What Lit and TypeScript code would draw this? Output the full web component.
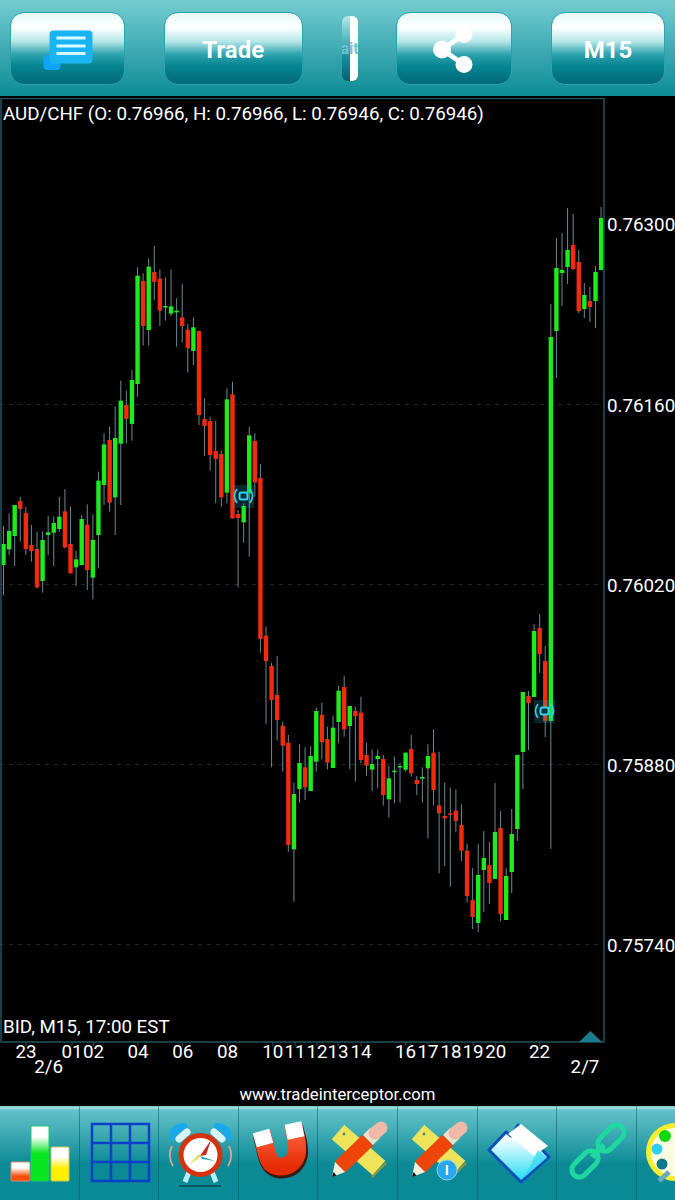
import { LitElement, html, css, svg } from "lit";
import { customElement } from "lit/decorators.js";

type Row = [string, number, number, number, number];

const conv = (y0: number, k: number, rows: Row[]): Row[] =>
  rows.map(([c, a, b, d, e]) => [c, y0 + a / k, y0 + b / k, y0 + d / k, y0 + e / k] as Row);

const candles: Row[] = [
  ...conv(240, 3, [
    ["g", 858, 1065, 912, 975], ["g", 820, 945, 873, 928], ["g", 795, 978, 795, 888], ["r", 770, 905, 783, 807],
    ["r", 800, 945, 819, 927], ["r", 855, 965, 915, 933], ["r", 875, 1045, 927, 1042], ["g", 875, 1058, 900, 1023],
    ["g", 828, 945, 877, 885], ["g", 830, 978, 849, 878], ["g", 770, 875, 830, 867], ["r", 747, 925, 814, 922],
    ["r", 800, 1000, 912, 1000], ["g", 932, 1038, 958, 982], ["g", 825, 975, 837, 975], ["r", 793, 1050, 854, 990],
    ["g", 823, 1078, 900, 1013], ["g", 695, 985, 722, 885], ["g", 580, 795, 613, 735], ["r", 560, 815, 600, 788],
    ["g", 500, 885, 594, 772], ["g", 422, 795, 482, 611], ["r", 452, 610, 495, 537], ["g", 390, 602, 420, 552],
    ["g", 82, 470, 107, 432], ["r", 100, 317, 123, 258], ["g", 55, 317, 80, 270], ["r", 18, 180, 96, 126],
    ["r", 88, 258, 116, 212], ["g", 112, 242, 198, 202], ["g", 88, 228, 199, 221], ["g", 175, 320, 212, 217],
    ["r", 132, 308, 232, 258], ["r", 252, 398, 269, 324], ["g", 232, 375, 262, 333], ["r", 272, 555, 273, 525],
    ["r", 475, 648, 537, 558], ["r", 530, 692, 543, 645], ["r", 542, 790, 633, 657], ["r", 632, 800, 642, 772],
    ["g", 445, 790, 478, 758], ["r", 425, 835, 463, 835], ["r", 810, 1042, 822, 834], ["g", 790, 908, 798, 847],
    ["g", 560, 950, 586, 760], ["r", 580, 770, 603, 727],
  ]),
  ...conv(480, 3, [
    ["r", -48, 518, -6, 477], ["r", 440, 732, 467, 543], ["r", 548, 862, 558, 660], ["r", 528, 782, 645, 720],
    ["r", 725, 875, 737, 797], ["r", 765, 1115, 788, 1095], ["g", 908, 1265, 942, 1108], ["g", 793, 968, 849, 927],
    ["r", 802, 960, 862, 922], ["g", 798, 933, 828, 933], ["g", 683, 875, 693, 845], ["r", 668, 838, 705, 787],
    ["r", 740, 868, 777, 848], ["g", 707, 864, 743, 864], ["g", 617, 790, 632, 726], ["r", 587, 770, 621, 748],
    ["g", 678, 868, 678, 738], ["r", 680, 905, 693, 708], ["r", 650, 850, 698, 840], ["r", 788, 887, 825, 857],
    ["g", 808, 933, 852, 869], ["g", 808, 925, 828, 837], ["r", 825, 977, 837, 945], ["g", 858, 1013, 895, 958],
    ["g", 830, 970, 872, 876], ["g", 850, 968, 858, 862], ["g", 818, 875, 818, 869], ["r", 765, 890, 807, 880],
    ["r", 888, 945, 900, 912], ["g", 862, 968, 891, 896], ["g", 793, 1075, 828, 865], ["r", 748, 977, 818, 930],
    ["r", 815, 1180, 976, 1000], ["r", 908, 1158, 1008, 1015], ["r", 923, 1220, 1000, 1003], ["r", 928, 1057, 992, 1023],
    ["r", 973, 1142, 1035, 1112], ["r", 1090, 1268, 1112, 1248],
  ]),
  ...conv(0, 1, [
    ["r", 868, 929, 900, 917], ["g", 844, 932, 875, 923], ["g", 831, 912, 858, 870], ["r", 842, 904, 865, 883],
    ["g", 783, 879, 832, 879], ["r", 811, 921, 828, 914], ["g", 868, 920, 876, 920], ["g", 809, 893, 834, 872],
    ["g", 755, 841, 755, 829], ["g", 692, 789, 692, 752], ["r", 691, 750, 696, 703], ["g", 624, 697, 631, 697],
    ["r", 614, 673, 628, 654], ["r", 646, 737, 661, 721], ["g", 304, 849, 337, 721], ["g", 238, 378, 268, 331],
    ["g", 233, 306, 270, 273], ["g", 208, 284, 250, 267], ["r", 214, 270, 245, 269], ["r", 250, 313, 262, 311],
    ["g", 283, 318, 295, 309], ["r", 287, 322, 301, 307], ["g", 266, 328, 272, 301], ["g", 207, 270, 218, 270],
  ]),
];

const xOf = (i: number) => 3.5 + 5.585 * i;
const prices: [string, number][] = [["0.76300", 224], ["0.76160", 405], ["0.76020", 585], ["0.75880", 765], ["0.75740", 945]];
const hours: [string, number][] = [
  ["23", 26], ["01", 72], ["02", 93.5], ["04", 138], ["06", 182.7], ["08", 227.6], ["10", 272.8], ["11", 295],
  ["12", 317], ["13", 338], ["14", 361], ["16", 405.6], ["17", 428], ["18", 451], ["19", 473], ["20", 495.7], ["22", 539.6],
];

const marker = (x: number, y: number) => svg`
  <rect x=${x - 10} y=${y - 11} width="21" height="23" fill="#25c4e4" opacity="0.2"></rect>
  <rect x=${x - 3.5} y=${y - 3.5} width="8" height="7" rx="2" fill="#06323c" stroke="#2fd4f2" stroke-width="2"></rect>
  <path d="M${x - 6} ${y - 7}Q${x - 11} ${y} ${x - 6} ${y + 7}M${x + 7} ${y - 7}Q${x + 12} ${y} ${x + 7} ${y + 7}" fill="none" stroke="#2fd4f2" stroke-width="1.6"></path>`;

const tools = (info: boolean) => svg`
  <path d="M20 26L61 62" stroke="#efe35a" stroke-width="19"></path>
  <path d="M54 71L68 57" stroke="#8f9a3c" stroke-width="2"></path>
  <circle cx="26" cy="28" r="1.4" fill="#3d8a80"></circle>
  <path d="M22 61L50 34" stroke="#ee460a" stroke-width="15"></path>
  <path d="M50 34L57 27" stroke="#ece5cd" stroke-width="14"></path>
  <path d="M57 27L63 22" stroke="#f0b8a6" stroke-width="13" stroke-linecap="round"></path>
  <path d="M17 56L27 66L14 71Z" fill="#f7efd8"></path>
  <path d="M15.500 66L18.500 69.500L14 71Z" fill="#111"></path>
  ${info ? svg`<circle cx="49" cy="64" r="10" fill="#2aa6ea" stroke="#7fd6f6" stroke-width="1"></circle>
    <path d="M49 59V69" stroke="#fff" stroke-width="2.400"></path>` : ""}`;

@customElement("app-root")
export class AppRoot extends LitElement {
  static styles = css`
    :host { display: block; width: 675px; height: 1200px; background: #000; overflow: hidden; font-family: Roboto, "Liberation Sans", sans-serif; }
    .top { height: 96px; box-sizing: border-box; padding: 1px 10px 0; display: flex; align-items: center; justify-content: space-between;
      background: linear-gradient(#74ccd0, #0c8b97); margin-bottom: 2px; }
    .btn { height: 73px; box-sizing: border-box; border: 1.500px solid #2ba3ae; border-radius: 14px; display: flex; align-items: center; justify-content: center;
      background: linear-gradient(#e5f8f8 0%, #fff 20%, #b5e6e8 40%, #2ea4ae 58%, #068492 75%, #02697a 100%);
      color: #fff; font-weight: 700; font-size: 24px; padding-top: 3px; }
    .w115 { width: 115px; } .w116 { width: 116px; } .w139 { width: 139px; } .w114 { width: 114px; }
    .btn svg { margin-top: -3px; }
    .narrow { width: 16px; height: 65px; box-sizing: border-box; border-radius: 6px; overflow: hidden; display: flex; align-items: center; justify-content: center;
      background: linear-gradient(90deg, transparent 48%, #fff 52%), linear-gradient(#b9e7e9, #1a95a1 60%, #02606e);
      color: #74c6cc; font-size: 16px; font-weight: 700; white-space: nowrap; }
    .chart { display: block; width: 675px; height: 985px; }
    .chart text { fill: #fff; font-family: Roboto, "Liberation Sans", sans-serif; font-size: 18.750px; }
    .site { height: 23px; text-align: center; color: #fff; font-size: 16.700px; line-height: 24px; }
    .bottom { height: 94px; display: flex; overflow: hidden; background: linear-gradient(#6fc9cd 0, #a3e0e2 2px, #64c2c8 4px, #0b8a96 62%, #0a8a96 100%); }
    .cell { flex: none; width: 79.600px; height: 94px; box-sizing: border-box; border-right: 1px solid rgba(0, 70, 80, 0.45); }
    .cell svg { display: block; width: 80px; height: 94px; }
  `;

  render() {
    return html`
      <div class="top">
        <div class="btn w115">
          <svg width="60" height="50" viewBox="0 0 60 50">
            <rect x="5.500" y="31" width="17" height="15" rx="4" fill="#0ea6f4"></rect>
            <rect x="11.500" y="6.500" width="43" height="33" rx="4" fill="#1ab4f2"></rect>
            <path d="M18.500 14H47.500M18.500 22H47.500M18.500 29.500H47.500" stroke="#d8f8ff" stroke-width="3"></path>
          </svg>
        </div>
        <div class="btn w139">Trade</div>
        <div class="narrow">ait</div>
        <div class="btn w116">
          <svg width="50" height="50" viewBox="0 0 50 50">
            <path d="M35 10.500L13 25.500L35 40.500" fill="none" stroke="#fff" stroke-width="5"></path>
            <circle cx="35" cy="10.500" r="8.500" fill="#fff"></circle>
            <circle cx="13" cy="25.500" r="9" fill="#fff"></circle>
            <circle cx="35" cy="40.500" r="8.500" fill="#fff"></circle>
          </svg>
        </div>
        <div class="btn w114">M15</div>
      </div>

      <svg class="chart" viewBox="0 98 675 985">
        ${prices.slice(1).map(([, y]) => svg`<line x1="0" x2="603" y1=${y - 0.5} y2=${y - 0.5} stroke="#262626" stroke-dasharray="4 5"></line>`)}
        ${candles.map(([c, a, b], i) => svg`<line x1=${xOf(i)} x2=${xOf(i)} y1=${a} y2=${b} stroke="#6a8a94" stroke-width="1"></line>`)}
        ${candles.map(([c, , , d, e], i) => svg`<rect x=${xOf(i) - 2.2} y=${d} width="4.400" height=${Math.max(e - d, 1.5)} fill=${c === "g" ? "#1cec1e" : "#f22b0e"}></rect>`)}
        ${marker(243, 496)}
        ${marker(544, 711)}
        <path d="M1 98.500H604V1042H1Z" fill="none" stroke="#27525e" stroke-width="1.500"></path>
        ${hours.map(([, x]) => svg`<line x1=${x} x2=${x} y1="1042" y2="1046" stroke="#27525e"></line>`)}
        <path d="M579 1042L590.500 1031L602 1042Z" fill="#1b7c90"></path>
        <text x="3" y="120">AUD/CHF (O: 0.76966, H: 0.76966, L: 0.76946, C: 0.76946)</text>
        <text x="3" y="1033">BID, M15, 17:00 EST</text>
        ${prices.map(([t, y]) => svg`<text x="607" y=${y + 6.5}>${t}</text>`)}
        ${hours.map(([t, x]) => svg`<text x=${x} y="1058" text-anchor="middle">${t}</text>`)}
        <text x="48.700" y="1073" text-anchor="middle">2/6</text>
        <text x="585" y="1073" text-anchor="middle">2/7</text>
      </svg>
      <div class="site">www.tradeinterceptor.com</div>

      <div class="bottom">
        <div class="cell"><svg viewBox="0 0 80 94">
          <defs>
            <linearGradient id="bR" x1="0" y1="0" x2="0" y2="1"><stop offset=".3" stop-color="#fff"></stop><stop offset=".75" stop-color="#f4500a"></stop></linearGradient>
            <linearGradient id="bG" x1="0" y1="0" x2="0" y2="1"><stop offset=".2" stop-color="#fff"></stop><stop offset=".5" stop-color="#08e620"></stop></linearGradient>
            <linearGradient id="bY" x1="0" y1="0" x2="0" y2="1"><stop offset=".3" stop-color="#fff"></stop><stop offset=".62" stop-color="#fff000"></stop></linearGradient>
            <linearGradient id="mag" x1="0" y1="0" x2="0" y2="1"><stop offset="0" stop-color="#ff6a48"></stop><stop offset="1" stop-color="#e52c04"></stop></linearGradient>
            <linearGradient id="fold" x1="0" y1="0" x2="0" y2="1"><stop offset=".2" stop-color="#fff"></stop><stop offset="1" stop-color="#1fdcf4"></stop></linearGradient>
          </defs>
          <rect x="11" y="56" width="19" height="19" rx="1" fill="url(#bR)" stroke="#d88a70"></rect>
          <rect x="31" y="20" width="18" height="55" rx="1" fill="url(#bG)" stroke="#22c878"></rect>
          <rect x="51" y="41" width="18" height="34" rx="1" fill="url(#bY)" stroke="#c8c850"></rect>
        </svg></div>
        <div class="cell"><svg viewBox="0 0 80 94">
          <path d="M12 18H69V75H12ZM31 18V75M50 18V75M12 37H69M12 56H69" fill="none" stroke="#0a40c8" stroke-width="2.500"></path>
        </svg></div>
        <div class="cell"><svg viewBox="0 0 80 94">
          <path d="M11 35Q8 17 27 17Q29 20 28 23Q17 24 18 33Z" fill="#18a8ec"></path>
          <path d="M72 35Q75 17 56 17Q54 20 55 23Q66 24 65 33Z" fill="#18a8ec"></path>
          <path d="M20 33L28 26" stroke="#d8f6f8" stroke-width="7" stroke-linecap="round"></path>
          <path d="M63 33L55 26" stroke="#d8f6f8" stroke-width="7" stroke-linecap="round"></path>
          <path d="M13 40Q8 50 14 60M70 40Q75 50 69 60" fill="none" stroke="#d9a590" stroke-width="1.800"></path>
          <path d="M30 66L26 76M53 66L57 76" stroke="#b8f0f2" stroke-width="5"></path>
          <circle cx="41.500" cy="49" r="19.500" fill="#fff" stroke="#d8320c" stroke-width="5"></circle>
          <path d="M41 50L52 34L47 49Z" fill="#c8281a"></path>
          <path d="M41 50L56 55L43 53Z" fill="#2a9cb0"></path>
          <path d="M42 50L30 59L40 48Z" fill="#e8d840"></path>
          <path d="M20 80H62" stroke="#0a4a54" stroke-width="1.500"></path>
        </svg></div>
        <div class="cell"><svg viewBox="0 0 80 94">
          <path d="M23 29C27 46 28 55 33 60C41 67 57 64 60 48C61 38 57 29 55 21" fill="none" stroke="#3a1a14" stroke-width="18"></path>
          <path d="M23 27C27 44 28 52 32 57C40 64 56 61 58 46C59 36 56 28 54 19" fill="none" stroke="url(#mag)" stroke-width="18"></path>
          <path d="M22 25L26 39" stroke="#fff" stroke-width="17"></path>
          <path d="M54 17L57 32" stroke="#fff" stroke-width="17"></path>
        </svg></div>
        <div class="cell"><svg viewBox="0 0 80 94">${tools(false)}</svg></div>
        <div class="cell"><svg viewBox="0 0 80 94">${tools(true)}</svg></div>
        <div class="cell"><svg viewBox="0 0 80 94">
          <path d="M11 44L28 26L33 30L40 19L71 51L43 76Z" fill="url(#fold)" stroke="#0a50b8" stroke-width="3" stroke-linejoin="round"></path>
          <path d="M43 18L70 40L56 50L30 28Z" fill="#fff"></path>
          <path d="M43 74L69 52L60 44L52 60Z" fill="#2fd8f0" opacity=".7"></path>
        </svg></div>
        <div class="cell"><svg viewBox="0 0 80 94">
          <g fill="none" stroke="#1fd8a0" stroke-width="5">
            <rect x="46.500" y="16.500" width="15" height="31" rx="7.500" transform="rotate(45 54 32)"></rect>
            <rect x="20.500" y="42.500" width="15" height="31" rx="7.500" transform="rotate(45 28 58)"></rect>
            <path d="M35 51L47 39" stroke-width="6"></path>
          </g>
        </svg></div>
        <div class="cell"><svg viewBox="0 0 80 94">
          <ellipse cx="38" cy="46" rx="29" ry="29" fill="#f6ee2c"></ellipse>
          <circle cx="38" cy="46" r="24" fill="#fffbe0"></circle>
          <circle cx="28" cy="30" r="6" fill="#10d810"></circle>
          <circle cx="20" cy="43" r="5.500" fill="#30d0ec"></circle>
          <circle cx="25" cy="58" r="5.500" fill="#0a7a84"></circle>
          <path d="M22 75L32 66" stroke="#6aa8c0" stroke-width="5"></path>
        </svg></div>
      </div>
    `;
  }
}
